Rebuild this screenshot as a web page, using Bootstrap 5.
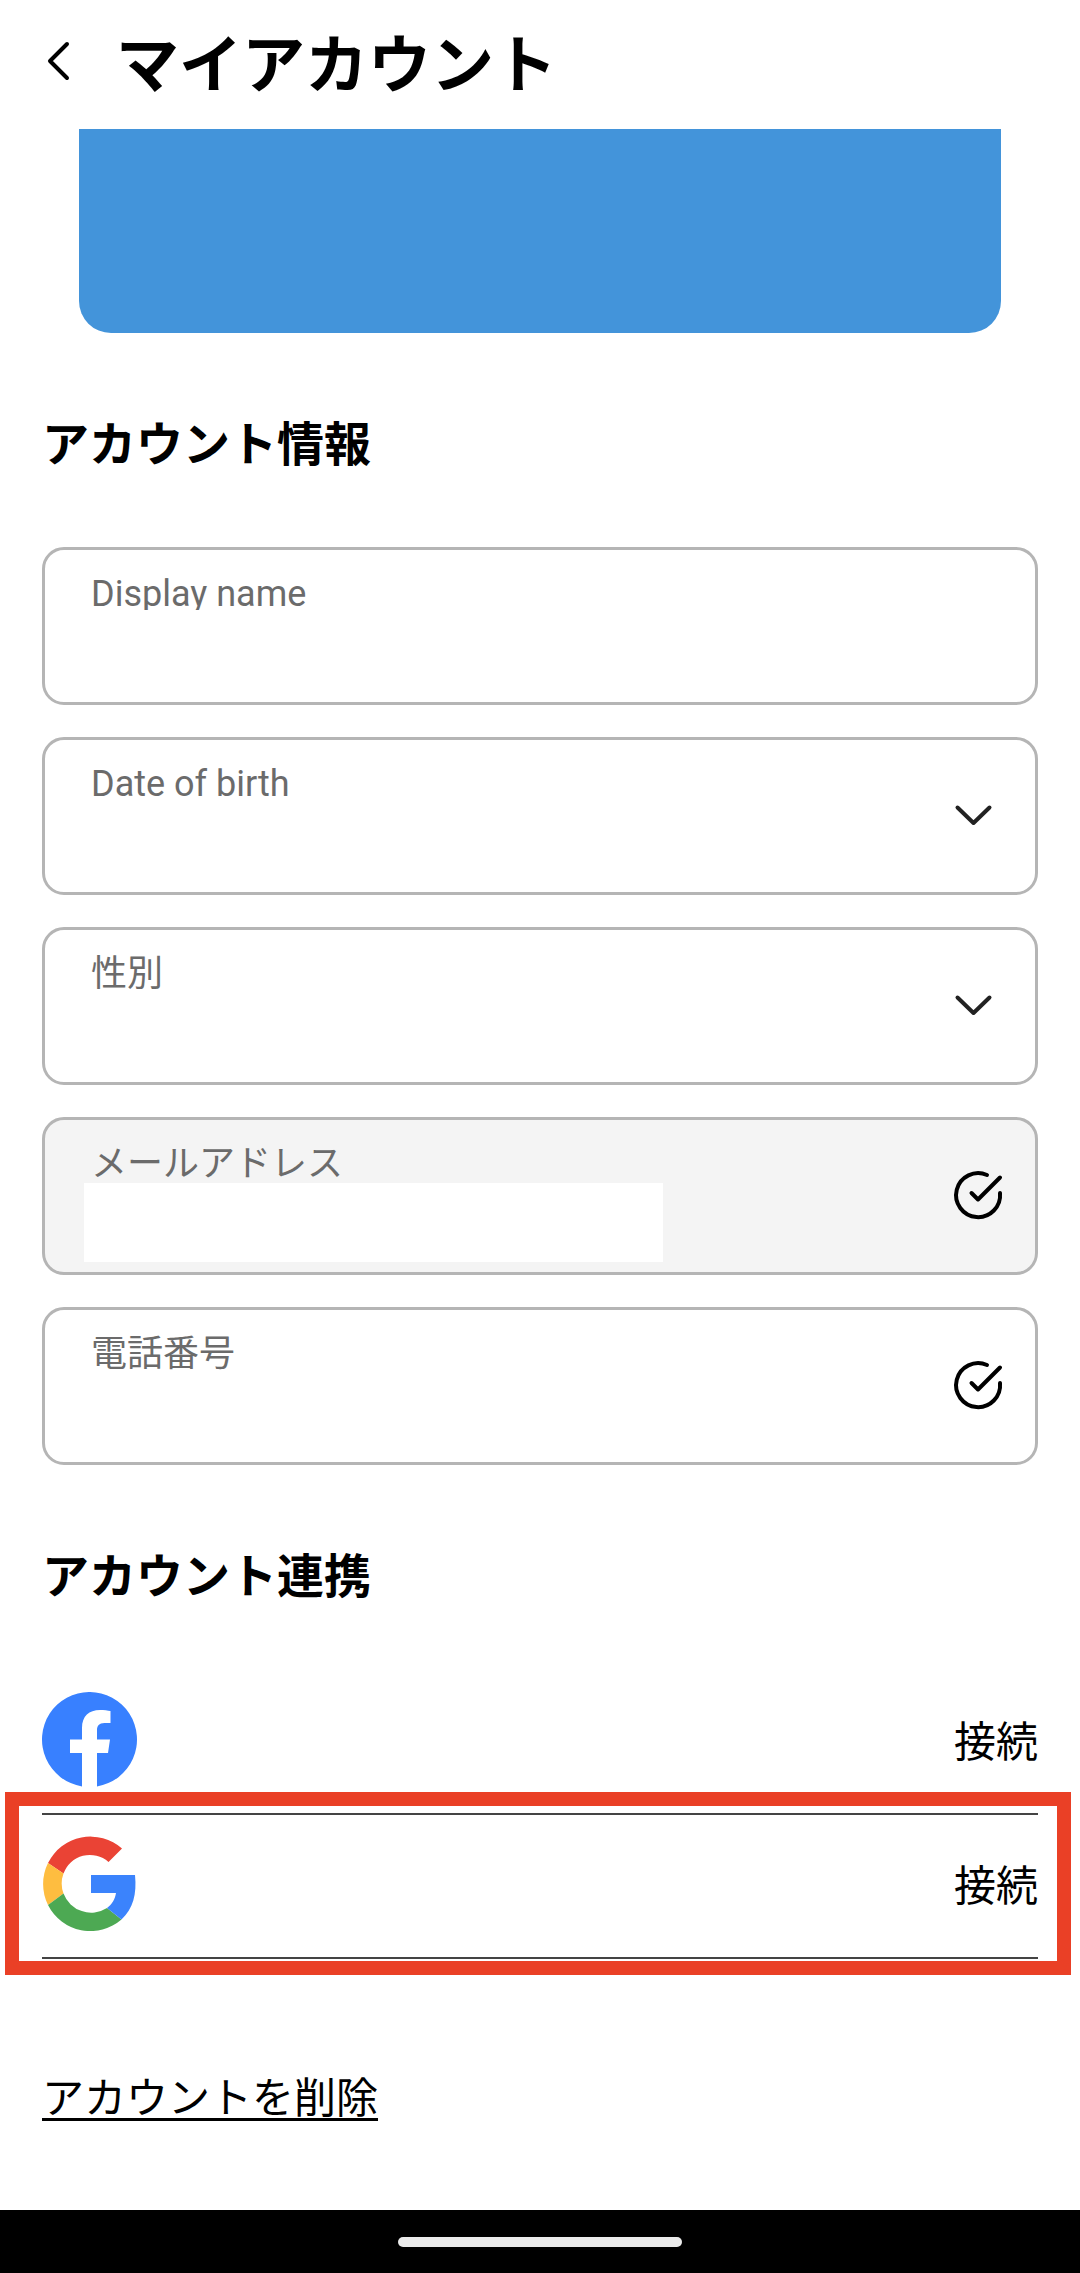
<!DOCTYPE html>
<html lang="ja">
<head>
<meta charset="utf-8">
<meta name="viewport" content="width=device-width, initial-scale=1">
<title>マイアカウント</title>
<link href="https://cdn.jsdelivr.net/npm/bootstrap@5.3.0/dist/css/bootstrap.min.css" rel="stylesheet">
<style>
  body { font-family: Roboto, "Noto Sans CJK JP", sans-serif; color: #000; background: #fff; }
  .app-header { height: 129px; padding: 0 42px 6px; gap: 38px; }
  .app-title { font-size: 63px; line-height: 72px; font-weight: 700; padding-top: 8px; }
  .back-btn { width: 36px; height: 48px; }
  .page-body { padding: 0 42px; }
  .banner { height: 204px; margin: 0 37px; background: #4394da; border-radius: 0 0 32px 32px; }
  .section-title { font-size: 47px; line-height: 56px; font-weight: 700; margin: 84px 0 0; }
  .field-list { gap: 32px; margin-top: 74px; }
  .field { height: 158px; border: 3px solid #b5b5b5; border-radius: 22px; padding: 0 33px 0 39px; }
  .field-locked { background: #f4f4f4; }
  .field-main { padding-top: 24px; }
  .field-label { height: 36px; line-height: 40px; font-size: 36px; color: #6b6b6b; padding-left: 7px; }
  .label-clipped { overflow: hidden; }
  .field-control { height: 79px; margin-top: 3px; padding: 0 7px; border: 0; font-size: 42px; background: transparent; appearance: none; }
  .field-locked .field-control { background: #fff; max-width: 579px; }
  .field-icon { width: 48px; height: 48px; overflow: visible; }
  .link-list { margin-top: 66px; }
  .link-row { padding: 21px 0 26px; border-bottom: 2px solid #444; }
  .brand-icon { width: 95px; height: 95px; }
  .connect-btn, .delete-link { font-size: 42px; line-height: 50px; color: #000; }
  .link-row .connect-btn { padding: 6px 0 0; }
  .highlight { inset: -23px -33px -18px -37px; border: 14px solid #ea4026; pointer-events: none; }
  .delete-link { text-underline-offset: 5px; text-decoration-thickness: 3px; }
  .delete-wrap { padding: 115px 0 86px; }
  .system-bar { height: 63px; background: #000; }
  .home-pill { width: 284px; height: 10px; background: #ebebeb; }
</style>
</head>
<body>
<header class="app-header d-flex align-items-center">
  <button type="button" class="back-btn btn p-0 border-0 d-flex" aria-label="戻る">
    <svg width="36" height="48" viewBox="0 0 36 48" fill="none" stroke="#000" stroke-width="4" stroke-linecap="round" stroke-linejoin="round"><path d="M25 6 8 23l17 17"/></svg>
  </button>
  <h1 class="app-title mb-0">マイアカウント</h1>
</header>

<main class="page-body">
  <div class="banner"></div>

  <h2 class="section-title">アカウント情報</h2>
  <form class="field-list d-flex flex-column">
    <div class="field d-flex align-items-center">
      <div class="field-main d-flex flex-column flex-grow-1 align-self-start">
        <label class="field-label label-clipped" for="displayName">Display name</label>
        <input class="field-control w-100" id="displayName" type="text">
      </div>
    </div>
    <div class="field d-flex align-items-center">
      <div class="field-main d-flex flex-column flex-grow-1 align-self-start">
        <label class="field-label" for="birth">Date of birth</label>
        <select class="field-control w-100" id="birth"><option></option></select>
      </div>
      <svg class="field-icon flex-shrink-0" viewBox="0 0 48 48" fill="none" stroke="#222" stroke-width="4" stroke-linecap="round" stroke-linejoin="round"><path d="M3.500 15.500 19.500 31 35.500 15.500"/></svg>
    </div>
    <div class="field d-flex align-items-center">
      <div class="field-main d-flex flex-column flex-grow-1 align-self-start">
        <label class="field-label" for="gender">性別</label>
        <select class="field-control w-100" id="gender"><option></option></select>
      </div>
      <svg class="field-icon flex-shrink-0" viewBox="0 0 48 48" fill="none" stroke="#222" stroke-width="4" stroke-linecap="round" stroke-linejoin="round"><path d="M3.500 15.500 19.500 31 35.500 15.500"/></svg>
    </div>
    <div class="field field-locked d-flex align-items-center">
      <div class="field-main d-flex flex-column flex-grow-1 align-self-start">
        <label class="field-label" for="email">メールアドレス</label>
        <input class="field-control w-100" id="email" type="email" readonly>
      </div>
      <svg class="field-icon flex-shrink-0" viewBox="0 0 48 48" fill="none" stroke="#000" stroke-width="4" stroke-linecap="round" stroke-linejoin="round"><path d="M33 3A22 22 0 1 0 46 21M17.500 21 24 27.500 46 5.500"/></svg>
    </div>
    <div class="field d-flex align-items-center">
      <div class="field-main d-flex flex-column flex-grow-1 align-self-start">
        <label class="field-label" for="phone">電話番号</label>
        <input class="field-control w-100" id="phone" type="tel">
      </div>
      <svg class="field-icon flex-shrink-0" viewBox="0 0 48 48" fill="none" stroke="#000" stroke-width="4" stroke-linecap="round" stroke-linejoin="round"><path d="M33 3A22 22 0 1 0 46 21M17.500 21 24 27.500 46 5.500"/></svg>
    </div>
  </form>

  <h2 class="section-title">アカウント連携</h2>
  <div class="link-list">
    <div class="link-row d-flex justify-content-between align-items-center">
      <svg class="brand-icon" viewBox="0 0 95 95" role="img" aria-label="Facebook">
        <path fill="#3880ff" d="M40 94.400V61H28V47.500H40V36C40 24 47 18 58 18C62 18 66 18.600 68.500 19V31H62.500C57 31 55 34 55 38V47.500H68L66 61H55V94.400A47.500 47.500 0 1 0 40 94.400Z"/>
      </svg>
      <button type="button" class="connect-btn btn border-0">接続</button>
    </div>
    <div class="link-row position-relative d-flex justify-content-between align-items-center">
      <svg class="brand-icon" viewBox="0 0 95 95" role="img" aria-label="Google">
        <path fill="#ea4335" d="M6 27A47.500 47.500 0 0 1 80 12.500L66.500 26A28 28 0 0 0 21.500 37.500Z"/>
        <path fill="#febd40" d="M6 27A47.500 47.500 0 0 0 6 69L21.500 57.500A29 29 0 0 1 21.500 37.500Z"/>
        <path fill="#4da953" d="M6 69A47.500 47.500 0 0 0 79.500 83.500L65 72A29.500 29.500 0 0 1 21.500 57.500Z"/>
        <path fill="#3b83fc" d="M49 39H93C95 58 91 73 79.500 83.500L65 72C70 68.500 73 63 74 57H49Z"/>
      </svg>
      <button type="button" class="connect-btn btn border-0">接続</button>
      <div class="highlight position-absolute"></div>
    </div>
  </div>

  <div class="delete-wrap d-flex">
    <a href="#" class="delete-link">アカウントを削除</a>
  </div>
</main>

<footer class="system-bar d-flex justify-content-center align-items-center">
  <div class="home-pill rounded-pill"></div>
</footer>
<script src="https://cdn.jsdelivr.net/npm/bootstrap@5.3.0/dist/js/bootstrap.bundle.min.js"></script>
</body>
</html>
